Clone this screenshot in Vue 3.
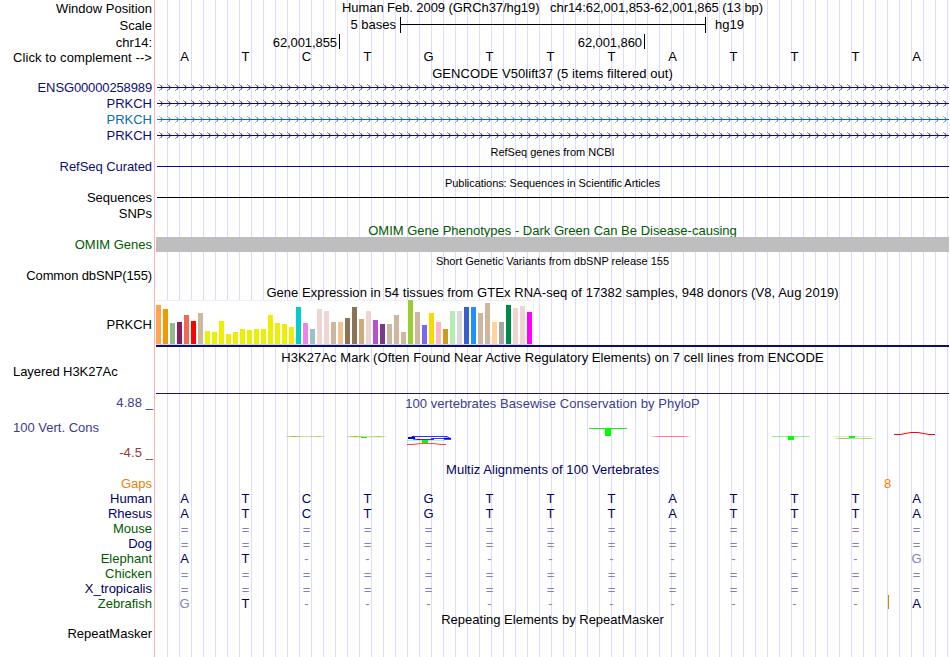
<template>
    <main class="browser">
        <!-- position, scale and sequence -->
        <section class="row tall">
            <div class="label">Window Position</div>
            <div class="lane title">Human Feb. 2009 (GRCh37/hg19) &nbsp; chr14:62,001,853-62,001,865 (13 bp)</div>
        </section>
        <section class="row tall">
            <div class="label">Scale</div>
            <div class="lane scale">
                <span class="scale-text">5 bases</span>
                <span class="scale-bar"></span>
                <span>hg19</span>
            </div>
        </section>
        <section class="row small">
            <div class="label">chr14:</div>
            <div class="lane ruler">
                <span v-for="tick in ticks" :key="tick.text" class="tick" :style="{ width: tick.width + 'px' }">{{
                    tick.text }}</span>
            </div>
        </section>
        <section class="row small">
            <div class="label wide">Click to complement --&gt;</div>
            <div class="lane bases">
                <span v-for="(base, i) in sequence" :key="i">{{ base }}</span>
            </div>
        </section>

        <!-- genes -->
        <h2 class="track-title loose">GENCODE V50lift37 (5 items filtered out)</h2>
        <section v-for="(gene, i) in genes" :key="'gene' + i" class="row" :style="{ color: gene.color }">
            <div class="label" :class="{ tight: gene.name.length > 10 }">{{ gene.name }}</div>
            <svg class="lane" width="793" height="16">
                <defs>
                    <pattern :id="'arrow' + i" x="-1" y="0" width="8" height="16" patternUnits="userSpaceOnUse">
                        <path d="M5.5 6L7.5 8.5L5.5 11" fill="none" stroke="currentColor" stroke-width="0.9" />
                        <path d="M4 5h1v1h-1zM4 11h1v1h-1z" fill="currentColor" opacity="0.4" />
                    </pattern>
                </defs>
                <rect x="1" y="8" width="792" height="1" fill="currentColor" />
                <rect x="1" y="0" width="792" height="16" :fill="`url(#arrow${i})`" />
            </svg>
        </section>

        <h2 class="track-title minor">RefSeq genes from NCBI</h2>
        <section class="row navy">
            <div class="label snug">RefSeq Curated</div>
            <div class="lane line"></div>
        </section>
        <h2 class="track-title minor snug">Publications: Sequences in Scientific Articles</h2>
        <section class="row">
            <div class="label">Sequences</div>
            <div class="lane line"></div>
        </section>
        <section class="row">
            <div class="label">SNPs</div>
        </section>
        <h2 class="track-title green">OMIM Gene Phenotypes - Dark Green Can Be Disease-causing</h2>
        <section class="row green">
            <div class="label">OMIM Genes</div>
            <div class="lane band"></div>
        </section>
        <h2 class="track-title minor">Short Genetic Variants from dbSNP release 155</h2>
        <section class="row">
            <div class="label tight">Common dbSNP(155)</div>
        </section>

        <!-- expression -->
        <h2 class="track-title loose">Gene Expression in 54 tissues from GTEx RNA-seq of 17382 samples, 948 donors (V8, Aug 2019)</h2>
        <section class="row gtex">
            <div class="label">PRKCH</div>
            <div class="lane expression">
                <div class="bars">
                    <i v-for="(bar, i) in bars" :key="i" :style="{ height: bar[0] + 'px', background: bar[1] }"></i>
                </div>
            </div>
        </section>

        <h2 class="track-title loose">H3K27Ac Mark (Often Found Near Active Regulatory Elements) on 7 cell lines from ENCODE</h2>
        <section class="row layered">
            <div class="label left snug">Layered H3K27Ac</div>
            <div class="lane"></div>
        </section>

        <!-- conservation -->
        <section class="row phylop">
            <div class="label stack">
                <span class="wide">4.88 _</span>
                <span class="left">100 Vert. Cons</span>
                <span class="low wide">-4.5 _</span>
            </div>
            <div class="lane">
                <h2 class="phylop-title loose">100 vertebrates Basewise Conservation by PhyloP</h2>
                <svg width="793" height="51" viewBox="156 409 793 51">
                    <defs>
                        <linearGradient id="olive">
                            <stop offset="0" stop-color="#b4b428" stop-opacity="0.3" />
                            <stop offset="0.2" stop-color="#a0a000" stop-opacity="0.85" />
                            <stop offset="0.5" stop-color="#c8c864" stop-opacity="0.55" />
                            <stop offset="0.85" stop-color="#a0a000" stop-opacity="0.65" />
                            <stop offset="1" stop-color="#b4b428" stop-opacity="0.2" />
                        </linearGradient>
                        <linearGradient id="rose">
                            <stop offset="0" stop-color="#f00" stop-opacity="0.15" />
                            <stop offset="0.2" stop-color="#f00" stop-opacity="0.5" />
                            <stop offset="0.8" stop-color="#f00" stop-opacity="0.5" />
                            <stop offset="1" stop-color="#f00" stop-opacity="0.1" />
                        </linearGradient>
                    </defs>
                    <rect x="286" y="436" width="39" height="1" fill="url(#olive)" />
                    <rect x="347" y="436" width="39" height="1" fill="url(#olive)" />
                    <rect x="346" y="437" width="38" height="1" fill="#0f0" opacity="0.15" />
                    <rect x="361" y="437" width="6" height="1" fill="#0f0" />
                    <path d="M412 436.5H447" stroke="#00f" opacity="0.8" />
                    <path d="M408 438H415M444 438.7H451" stroke="#00f" stroke-width="2" />
                    <path d="M411 437.2L414 436.5M446 436.5L449 437.5M413 439.2L420 439.5M431 438.5H446" fill="none" stroke="#00f" opacity="0.8" />
                    <path d="M417 439.5H434" stroke="#00f" opacity="0.8" />
                    <rect x="407" y="440" width="38" height="1" fill="#0f0" opacity="0.3" />
                    <rect x="422" y="440" width="6" height="3" fill="#0f0" />
                    <path d="M407 444.5H412L420 443.6H434L441 444.5H446" fill="none" stroke="#f00" opacity="0.75" />
                    <rect x="589" y="428" width="38" height="1" fill="#0f0" />
                    <rect x="605" y="428" width="6" height="8" fill="#0f0" />
                    <rect x="651" y="436" width="40" height="1" fill="url(#rose)" />
                    <rect x="772" y="436" width="38" height="1" fill="#0f0" opacity="0.5" />
                    <rect x="788" y="436" width="6" height="4" fill="#0f0" />
                    <rect x="833" y="436" width="38" height="1" fill="#0f0" opacity="0.25" />
                    <rect x="849" y="436" width="6" height="2" fill="#0f0" />
                    <rect x="835" y="438" width="39" height="1" fill="url(#olive)" />
                    <path d="M894 434.5H900L911 432.5H918L929 434.5H935" fill="none" stroke="#f00" />
                </svg>
            </div>
        </section>

        <!-- multiple alignment -->
        <h2 class="track-title dark loose">Multiz Alignments of 100 Vertebrates</h2>
        <section class="row small orange">
            <div class="label">Gaps</div>
            <div class="lane gap-count">8</div>
        </section>
        <section v-for="species in alignment" :key="species.name" class="row small">
            <div class="label" :class="species.tone">{{ species.name }}</div>
            <div class="lane bases aligned">
                <span v-for="(base, i) in species.bases" :key="i"
                    :class="{ faded: base !== sequence[i], unaligned: base === '=' }">{{ base }}</span>
                <b v-if="species.insert" class="insert"></b>
            </div>
        </section>

        <h2 class="track-title">Repeating Elements by RepeatMasker</h2>
        <section class="row">
            <div class="label">RepeatMasker</div>
        </section>
    </main>
</template>

<script setup>
const sequence = "ATCTGTTTATTTA";

const ticks = [
    { text: "62,001,855", width: 184 },
    { text: "62,001,860", width: 305 },
];

const genes = [
    { name: "ENSG00000258989", color: "#0c0c78" },
    { name: "PRKCH", color: "#0c0c78" },
    { name: "PRKCH", color: "#0a6cae" },
    { name: "PRKCH", color: "#0c0c78" },
];

// [height, color] for each tissue
const bars = [
    [39, "#ffa54f"], [35, "#ee9a00"], [21, "#8fbc8f"], [22, "#8b1c62"], [29, "#ee6a50"], [23, "#ff0000"],
    [31, "#cdb79e"],
    [13, "#eeee00"], [12, "#eeee00"], [23, "#eeee00"], [10, "#eeee00"], [12, "#eeee00"], [15, "#eeee00"],
    [14, "#eeee00"], [15, "#eeee00"], [15, "#eeee00"], [29, "#eeee00"], [21, "#eeee00"], [20, "#eeee00"],
    [17, "#eeee00"],
    [37, "#00cdcd"], [21, "#ee82ee"], [15, "#9ac0cd"], [35, "#eed5d2"], [33, "#eed5d2"], [22, "#cdb79e"],
    [22, "#eec591"], [26, "#8b7355"], [37, "#8b7355"], [25, "#cdaa7d"], [33, "#eed5d2"], [24, "#b452cd"],
    [20, "#7a378b"], [20, "#cdb79e"], [29, "#cdb79e"], [12, "#cdb79e"], [44, "#9acd32"], [32, "#cdb79e"],
    [19, "#7a67ee"], [31, "#ffd700"], [22, "#ffb6c1"], [15, "#cd9b1d"], [33, "#b4eeb4"], [33, "#d9d9d9"],
    [37, "#3a5fcd"], [37, "#1e90ff"], [31, "#cdb79e"], [41, "#cdb79e"], [22, "#ffd39b"], [22, "#a6a6a6"],
    [39, "#008b45"], [36, "#eed5d2"], [38, "#eed5d2"], [32, "#ff00ff"],
];

const alignment = [
    { name: "Human", tone: "dark", bases: "ATCTGTTTATTTA" },
    { name: "Rhesus", tone: "dark", bases: "ATCTGTTTATTTA" },
    { name: "Mouse", tone: "green", bases: "=============" },
    { name: "Dog", tone: "dark", bases: "=============" },
    { name: "Elephant", tone: "green", bases: "AT----------G" },
    { name: "Chicken", tone: "green", bases: "=============" },
    { name: "X_tropicalis", tone: "dark", bases: "=============" },
    { name: "Zebrafish", tone: "green", bases: "GT----------A", insert: true },
];
</script>

<style>
body {
    margin: 0;
    background: #fff;
}
</style>

<style scoped>
.browser {
    width: 949px;
    height: 657px;
    overflow: hidden;
    font: 13px/15px "Liberation Sans", Arial, sans-serif;
    color: #000;
    background:
        linear-gradient(#ffb4b4, #ffb4b4) 154px 0 / 1px 100% no-repeat,
        repeating-linear-gradient(90deg, transparent 0 11px, #dcdcff 11px 12px) 156px 0 / 793px 100% no-repeat;
}

.row {
    display: flex;
    height: 16px;
}

.row.tall {
    height: 17px;
}

.row.small {
    height: 15px;
}

.label {
    box-sizing: border-box;
    flex: none;
    width: 156px;
    padding: 1px 4px 0 0;
    text-align: right;
    white-space: nowrap;
}

.label.left {
    padding-left: 13px;
    text-align: left;
}

.lane {
    flex: none;
    width: 793px;
    white-space: nowrap;
}

.title {
    text-align: center;
    letter-spacing: -0.07px;
}

.track-title {
    height: 15px;
    margin: 0 0 0 156px;
    padding-top: 2px;
    box-sizing: border-box;
    font-size: 13px;
    font-weight: normal;
    text-align: center;
    white-space: nowrap;
}

.track-title.minor {
    font-size: 11px;
}

.loose {
    letter-spacing: 0.055px;
}

.wide {
    letter-spacing: 0.09px;
}

.snug {
    letter-spacing: -0.06px;
}

.tight {
    letter-spacing: -0.13px;
}

.navy {
    color: #0c0c78;
}

.dark {
    color: #000064;
}

.green {
    color: #005a00;
}

.orange {
    color: #e68200;
}

/* scale and ruler */
.scale {
    display: flex;
}

.scale-text {
    width: 240px;
    margin-right: 4px;
    text-align: right;
}

.scale-bar {
    box-sizing: border-box;
    width: 306px;
    height: 16px;
    margin-right: 9px;
    border: solid #000;
    border-width: 0 1px;
    background: linear-gradient(#000, #000) 0 7px / 100% 1px no-repeat;
}

.ruler {
    display: flex;
}

.tick {
    box-sizing: border-box;
    height: 15px;
    padding: 1px 2px 0 0;
    border-right: 1px solid #000;
    text-align: right;
    letter-spacing: -0.08px;
}

.bases {
    display: flex;
    margin-left: -2px;
}

.bases span {
    width: 61px;
    text-align: center;
}

.aligned {
    position: relative;
    padding-top: 1px;
    color: #000064;
}

.faded {
    color: #8282b4;
}

.unaligned {
    padding-top: 1px;
}

.insert {
    position: absolute;
    top: 0;
    left: 734px;
    width: 1px;
    height: 14px;
    background: #e68200;
}

.gap-count {
    box-sizing: border-box;
    padding: 1px 0 0 728px;
}

.line {
    height: 1px;
    width: 792px;
    margin: 8px 0 0 1px;
    background: currentColor;
}

.band {
    height: 15px;
    margin-top: 1px;
    background: #bebebe;
}

/* expression bars */
.gtex {
    height: 50px;
}

.gtex .label {
    padding-top: 19px;
}

.expression {
    height: 47px;
    margin-top: 2px;
    box-sizing: border-box;
    border-bottom: 2px solid #0c0c78;
}

.bars {
    display: flex;
    align-items: flex-end;
    gap: 2px;
    box-sizing: border-box;
    width: 378px;
    height: 45px;
    padding-bottom: 1px;
    background: #fff;
    box-shadow: inset 0 1px #f0f0f0, inset -1px 0 #f0f0f0, inset 0 -1px #d8d8d8;
}

.bars i {
    width: 5px;
}

.layered {
    height: 31px;
}

.layered .lane {
    box-sizing: border-box;
    border-bottom: 1px solid #1e1464;
}

/* conservation graph */
.phylop {
    height: 66px;
    color: #3c3c8c;
}

.stack {
    display: flex;
    flex-direction: column;
    gap: 10px;
    padding-right: 3px;
}

.stack .left {
    padding-left: 13px;
    text-align: left;
}

.low {
    color: #8c3c3c;
}

.phylop-title {
    box-sizing: border-box;
    height: 15px;
    margin: 0;
    padding-top: 2px;
    font-size: 13px;
    font-weight: normal;
    text-align: center;
}

.phylop svg {
    display: block;
}
</style>
